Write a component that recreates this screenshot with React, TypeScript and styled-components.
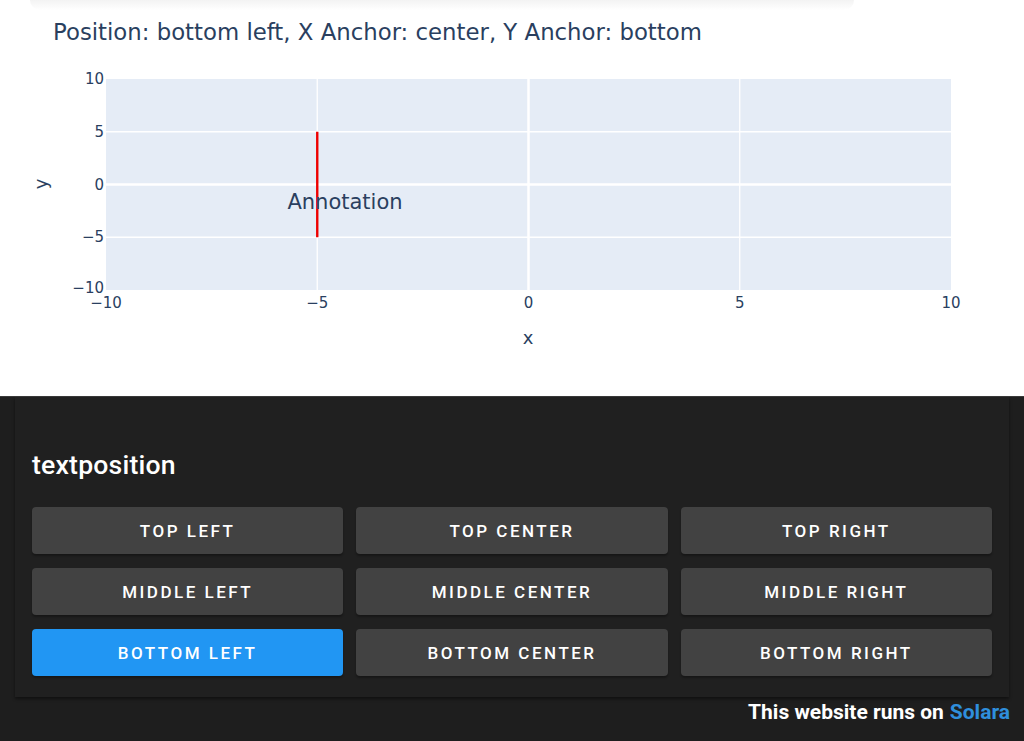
import React, { useState } from "react";
import styled, { createGlobalStyle } from "styled-components";

const Global = createGlobalStyle`
  html, body { margin: 0; padding: 0; background: #1e1e1e; }
  body { font-family: Roboto, "Liberation Sans", sans-serif; }
  * { box-sizing: border-box; }
`;

const Page = styled.div`
  width: 1024px;
  height: 741px;
  display: flex;
  flex-direction: column;
  overflow: hidden;
`;

const PlotSection = styled.section`
  height: 396px;
  background: #ffffff;
  display: flex;
  flex-direction: column;
`;

const TopShade = styled.div`
  height: 10px;
  margin: 0 170px 0 30px;
  background: linear-gradient(to bottom, #f3f3f3, #ffffff);
  border-radius: 0 0 12px 12px;
`;

const ChartSvg = styled.svg`
  display: block;
  margin-top: -10px;
  font-family: "DejaVu Sans", Verdana, sans-serif;
`;

const DarkSection = styled.section`
  flex: 1;
  background: #1e1e1e;
  border-top: 1px solid #3a3a3a;
  display: flex;
  flex-direction: column;
`;

const Card = styled.div`
  margin: 0 15px 0 15px;
  padding: 53px 17px 21px 17px;
  background: #202020;
  box-shadow: 0 2px 3px rgba(0, 0, 0, 0.45);
  display: flex;
  flex-direction: column;
  gap: 27px;
`;

const Label = styled.div`
  color: #ffffff;
  font-size: 26.6px;
  font-weight: 500;
  letter-spacing: 0.2px;
  line-height: 30px;
`;

const Grid = styled.div`
  display: grid;
  grid-template-columns: repeat(3, 1fr);
  column-gap: 13px;
  row-gap: 14px;
`;

const Btn = styled.button<{ $active: boolean }>`
  height: 47px;
  border: none;
  border-radius: 4px;
  background: ${(p) => (p.$active ? "#2196f3" : "#424242")};
  color: #ffffff;
  font-family: Roboto, "Liberation Sans", sans-serif;
  font-weight: 500;
  font-size: 17px;
  letter-spacing: 2.5px;
  text-transform: uppercase;
  box-shadow: 0 2px 2px rgba(0, 0, 0, 0.3);
  cursor: pointer;
  padding: 0;
`;

const Footer = styled.div`
  display: flex;
  justify-content: flex-end;
  padding: 3px 14px 0 0;
  font-size: 21px;
  font-weight: 700;
  color: #ffffff;
  line-height: 24px;
`;

const Brand = styled.span`
  color: #2f8fdc;
  margin-left: 6px;
`;

const X0 = 106;
const X1 = 951;
const Y0 = 79;
const Y1 = 290;
const sx = (v: number) => X0 + ((v + 10) / 20) * (X1 - X0);
const sy = (v: number) => Y1 - ((v + 10) / 20) * (Y1 - Y0);
const fmt = (v: number) => (v < 0 ? "\u2212" + Math.abs(v) : String(v));

const Chart: React.FC = () => {
  const ticks = [-10, -5, 0, 5, 10];
  return (
    <ChartSvg width={1024} height={396} viewBox="0 0 1024 396">
      <text x={53} y={40} fontSize={22.8} fill="#2a3f5f">
        Position: bottom left, X Anchor: center, Y Anchor: bottom
      </text>
      <rect x={X0} y={Y0} width={X1 - X0} height={Y1 - Y0} fill="#e5ecf6" />
      {[-5, 5].map((v) => (
        <line key={"gx" + v} x1={sx(v)} x2={sx(v)} y1={Y0} y2={Y1} stroke="#fff" strokeWidth={1.3} />
      ))}
      {[-5, 5].map((v) => (
        <line key={"gy" + v} x1={X0} x2={X1} y1={sy(v)} y2={sy(v)} stroke="#fff" strokeWidth={1.3} />
      ))}
      <line x1={sx(0)} x2={sx(0)} y1={Y0} y2={Y1} stroke="#fff" strokeWidth={2.5} />
      <line x1={X0} x2={X1} y1={sy(0)} y2={sy(0)} stroke="#fff" strokeWidth={2.5} />
      <line x1={sx(-5)} x2={sx(-5)} y1={sy(5)} y2={sy(-5)} stroke="#ee0000" strokeWidth={2.4} />
      <text x={345} y={209} fontSize={21} fill="#2a3f5f" textAnchor="middle">
        Annotation
      </text>
      {ticks.map((v) => (
        <text key={"tx" + v} x={sx(v)} y={308} fontSize={15} fill="#2a3f5f" textAnchor="middle">
          {fmt(v)}
        </text>
      ))}
      {ticks.map((v) => (
        <text key={"ty" + v} x={104} y={v === -10 ? sy(v) + 3 : sy(v) + 5} fontSize={15} fill="#2a3f5f" textAnchor="end">
          {fmt(v)}
        </text>
      ))}
      <text x={528} y={344} fontSize={18} fill="#2a3f5f" textAnchor="middle">
        x
      </text>
      <text x={0} y={0} fontSize={18} fill="#2a3f5f" textAnchor="middle" transform="translate(47 184) rotate(-90)">
        y
      </text>
    </ChartSvg>
  );
};

const OPTIONS = [
  "top left",
  "top center",
  "top right",
  "middle left",
  "middle center",
  "middle right",
  "bottom left",
  "bottom center",
  "bottom right",
];

export default function App() {
  const [selected, setSelected] = useState("bottom left");
  return (
    <Page>
      <Global />
      <PlotSection>
        <TopShade />
        <Chart />
      </PlotSection>
      <DarkSection>
        <Card>
          <Label>textposition</Label>
          <Grid>
            {OPTIONS.map((o) => (
              <Btn key={o} $active={o === selected} onClick={() => setSelected(o)}>
                {o}
              </Btn>
            ))}
          </Grid>
        </Card>
        <Footer>
          This website runs on<Brand>Solara</Brand>
        </Footer>
      </DarkSection>
    </Page>
  );
}
